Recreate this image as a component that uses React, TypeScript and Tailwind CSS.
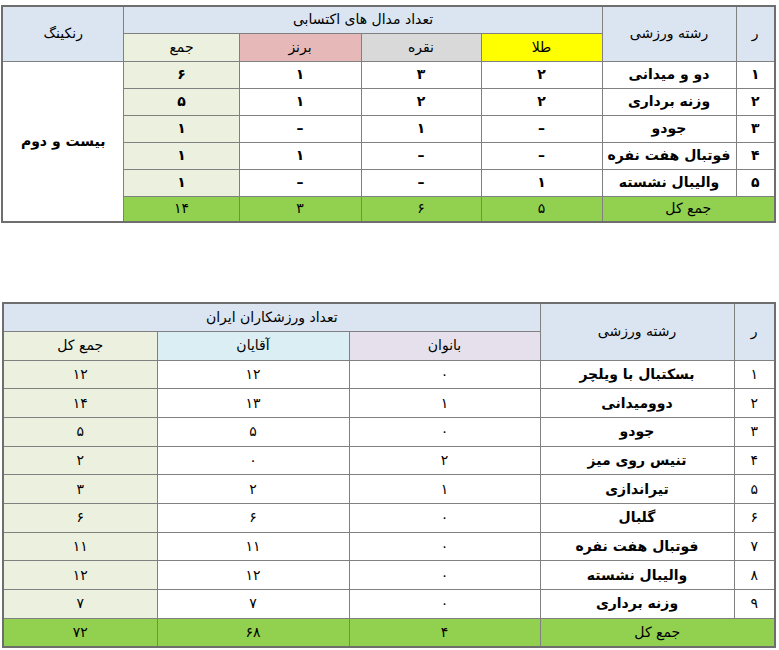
import React from "react";

const B = "border border-[#808080]";

const t1 = [
  ["۱", "دو و میدانی", "۲", "۳", "۱", "۶"],
  ["۲", "وزنه برداری", "۲", "۲", "۱", "۵"],
  ["۳", "جودو", "–", "۱", "–", "۱"],
  ["۴", "فوتبال هفت نفره", "–", "–", "۱", "۱"],
  ["۵", "والیبال نشسته", "۱", "–", "–", "۱"],
];

const t2 = [
  ["۱", "بسکتبال با ویلچر", "۰", "۱۲", "۱۲"],
  ["۲", "دوومیدانی", "۱", "۱۳", "۱۴"],
  ["۳", "جودو", "۰", "۵", "۵"],
  ["۴", "تنیس روی میز", "۲", "۰", "۲"],
  ["۵", "تیراندازی", "۱", "۲", "۳"],
  ["۶", "گلبال", "۰", "۶", "۶"],
  ["۷", "فوتبال هفت نفره", "۰", "۱۱", "۱۱"],
  ["۸", "والیبال نشسته", "۰", "۱۲", "۱۲"],
  ["۹", "وزنه برداری", "۰", "۷", "۷"],
];

export default function App() {
  return (
    <div
      dir="rtl"
      className="w-[779px] h-[650px] bg-white text-black text-[14px] relative"
      style={{ fontFamily: '"DejaVu Sans", sans-serif' }}
    >
      <div className="pt-[5px] pr-[3px]">
        <table className="table-fixed border-collapse w-[773px] border-2 border-[#6e6e6e] text-center">
          <colgroup>
            <col className="w-[39px]" />
            <col className="w-[134px]" />
            <col className="w-[121px]" />
            <col className="w-[120px]" />
            <col className="w-[122px]" />
            <col className="w-[115px]" />
            <col className="w-[122px]" />
          </colgroup>
          <tbody>
            <tr className="h-[27px]">
              <td rowSpan={2} className={`${B} bg-[#dbe5f1]`}>ر</td>
              <td rowSpan={2} className={`${B} bg-[#dbe5f1]`}>رشته ورزشی</td>
              <td colSpan={4} className={`${B} bg-[#dbe5f1]`}>تعداد مدال های اکتسابی</td>
              <td rowSpan={2} className={`${B} bg-[#dbe5f1]`}>رنکینگ</td>
            </tr>
            <tr className="h-[28px]">
              <td className={`${B} bg-[#ffff00]`}>طلا</td>
              <td className={`${B} bg-[#d9d9d9]`}>نقره</td>
              <td className={`${B} bg-[#e6b8b7]`}>برنز</td>
              <td className={`${B} bg-[#ebf1de]`}>جمع</td>
            </tr>
            {t1.map((r, i) => (
              <tr key={i} className="h-[27px] font-bold">
                <td className={B}>{r[0]}</td>
                <td className={B}>{r[1]}</td>
                <td className={B}>{r[2]}</td>
                <td className={B}>{r[3]}</td>
                <td className={B}>{r[4]}</td>
                <td className={`${B} bg-[#ebf1de]`}>{r[5]}</td>
                {i === 0 && (
                  <td rowSpan={6} className={`${B} bg-white`}>بیست و دوم</td>
                )}
              </tr>
            ))}
            <tr className="h-[26px] bg-[#92d050]">
              <td colSpan={2} className={B}>جمع کل</td>
              <td className={B}>۵</td>
              <td className={B}>۶</td>
              <td className={B}>۳</td>
              <td className={B}>۱۴</td>
            </tr>
          </tbody>
        </table>
      </div>

      <div className="pt-[79px] pr-[3px]">
        <table className="table-fixed border-collapse w-[772px] border-2 border-[#6e6e6e] text-center">
          <colgroup>
            <col className="w-[41px]" />
            <col className="w-[194px]" />
            <col className="w-[191px]" />
            <col className="w-[192px]" />
            <col className="w-[154px]" />
          </colgroup>
          <tbody>
            <tr className="h-[28px]">
              <td rowSpan={2} className={`${B} bg-[#dbe5f1]`}>ر</td>
              <td rowSpan={2} className={`${B} bg-[#dbe5f1]`}>رشته ورزشی</td>
              <td colSpan={3} className={`${B} bg-[#dbe5f1]`}>تعداد ورزشکاران ایران</td>
            </tr>
            <tr className="h-[29px]">
              <td className={`${B} bg-[#e5e0ec]`}>بانوان</td>
              <td className={`${B} bg-[#daeef3]`}>آقایان</td>
              <td className={`${B} bg-[#ebf1de]`}>جمع کل</td>
            </tr>
            {t2.map((r, i) => (
              <tr key={i} className="h-[28.7px]">
                <td className={B}>{r[0]}</td>
                <td className={`${B} font-bold`}>{r[1]}</td>
                <td className={B}>{r[2]}</td>
                <td className={B}>{r[3]}</td>
                <td className={`${B} bg-[#ebf1de]`}>{r[4]}</td>
              </tr>
            ))}
            <tr className="h-[29px] bg-[#92d050]">
              <td colSpan={2} className={B}>جمع کل</td>
              <td className={B}>۴</td>
              <td className={B}>۶۸</td>
              <td className={B}>۷۲</td>
            </tr>
          </tbody>
        </table>
      </div>
    </div>
  );
}
